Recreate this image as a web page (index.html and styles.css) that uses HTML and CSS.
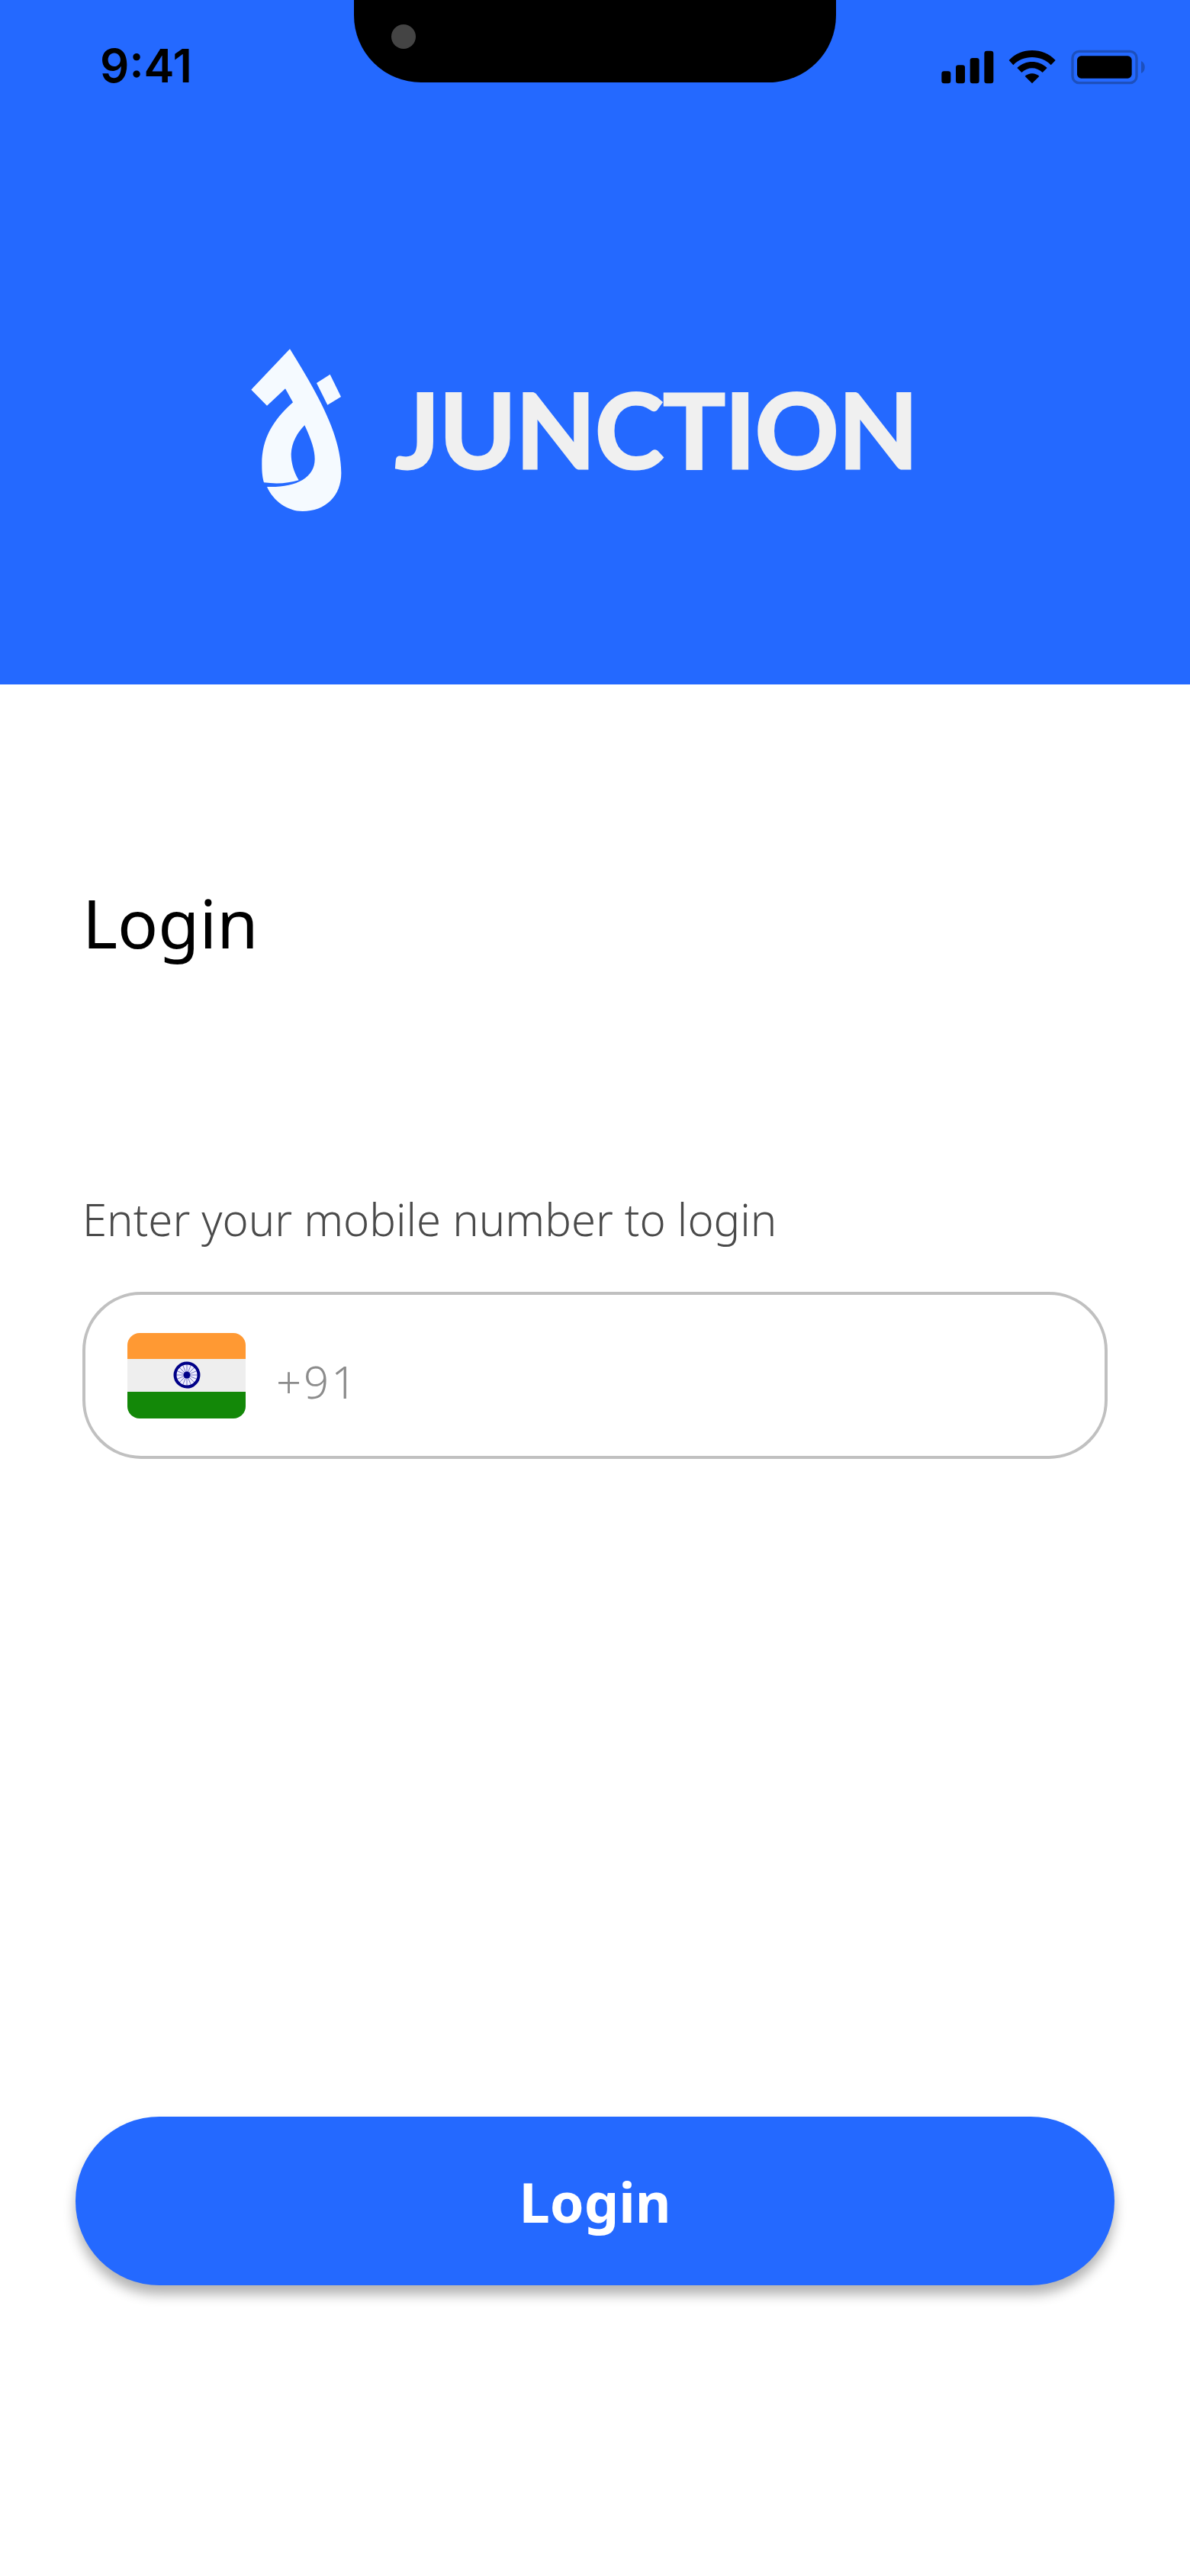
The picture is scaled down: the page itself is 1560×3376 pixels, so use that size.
FILE: index.html

```html
<!DOCTYPE html>
<html>
<head>
    <title>Junction Login</title>
    <meta http-equiv="Content-Type" content="text/html;charset=UTF-8"/>
    <link rel="stylesheet" href="styles.css">
</head>
<body>
<div class="top-panel">
    <div class="status-bar">
        <div class="status-time">9:41</div>
        <div class="notch"><span class="camera"></span></div>
        <svg class="status-icons" viewBox="0 0 960 210">
            <rect x="103" y="130" width="36" height="48" rx="10"/>
            <rect x="159" y="106" width="36" height="72" rx="10"/>
            <rect x="215" y="78" width="36" height="100" rx="10"/>
            <rect x="271" y="50" width="36" height="128" rx="10"/>
            <path d="M368 87C415 35 503 35 551 87L533 106C495 65 423 65 385 106Z"/>
            <path d="M400 117C435 85 483 85 518 117L500 135C475 112 443 112 418 135Z"/>
            <path d="M431 150C447 135 471 135 487 150L459 178Z"/>
            <rect x="618" y="52" width="252" height="124" rx="26" fill="none" stroke="#1d50bd" stroke-width="10"/>
            <rect x="636" y="70" width="215" height="88" rx="16"/>
            <path d="M888 90C906 96 908 130 888 138Z" fill="#1d50bd"/>
        </svg>
    </div>
    <div class="brand">
        <svg class="brand-mark" viewBox="0 0 720 750">
            <path d="M240 82L88 242L150 305L222 238L252 292C170 365 128 440 130 540C130 570 133 590 138 607C190 614 235 610 275 598C255 565 245 530 245 495C247 450 270 410 298 382C325 440 338 480 338 515C338 590 260 628 150 624C175 680 230 720 290 720C380 720 442 660 442 570C442 420 350 260 240 82Z"/>
            <path d="M345 216L398 182L441 270L388 302Z"/>
        </svg>
        <span class="brand-name">JUNCTION</span>
    </div>
</div>
<div class="login-form">
    <h1 class="login-title">Login</h1>
    <div class="mobile-label">Enter your mobile number to login</div>
    <div class="mobile-input">
        <div class="flag">
            <div class="flag-orange"></div>
            <div class="flag-white">
                <svg class="chakra" viewBox="0 0 36 36">
                    <circle cx="18" cy="18" r="15.5" fill="#eef" stroke="#000088" stroke-width="4"/>
                    <path d="M18 3V33M3 18H33M7.4 7.4L28.6 28.6M28.6 7.4L7.4 28.6M12.3 4.2L23.7 31.8M23.7 4.2L12.3 31.8M4.2 12.3L31.8 23.7M4.2 23.7L31.8 12.3" stroke="#000088" stroke-width=".5"/>
                    <circle cx="18" cy="18" r="4.5" fill="#000088"/>
                </svg>
            </div>
            <div class="flag-green"></div>
        </div>
        <span class="dial-code">+91</span>
    </div>
    <button class="login-button">Login</button>
</div>
</body>
</html>
```

FILE: styles.css

```css
* {
    box-sizing: border-box;
}

html, body {
    margin: 0;
    padding: 0;
}

body {
    width: 1560px;
    height: 3376px;
    overflow: hidden;
    background-color: #fff;
    font-family: "Noto Sans", sans-serif;
}

.top-panel {
    height: 897px;
    background-color: #2469ff;
}

.status-bar {
    display: grid;
    grid-template-columns: 464px 632px 464px;
    grid-template-rows: 108px;
    height: 108px;
}

.status-time {
    padding: 56px 0 0 131px;
    font-family: "Inter", sans-serif;
    font-size: 60px;
    font-weight: 600;
    line-height: 60px;
    color: #000;
}

.notch {
    position: relative;
    background-color: #000;
    border-radius: 0 0 88px 88px;
}

.camera {
    position: absolute;
    left: 49px;
    top: 32px;
    width: 32px;
    height: 32px;
    border-radius: 50%;
    background-color: #444;
}

.status-icons {
    display: block;
    width: 320px;
    height: 70px;
    margin: 50px 0 0 104px;
}

.brand {
    display: flex;
    align-items: center;
    height: 250px;
    margin-top: 322px;
    padding-left: 300px;
}

.brand-mark {
    width: 240px;
    height: 250px;
    fill: #f5faff;
}

.brand-name {
    margin: 14px 0 0 -22px;
    font-family: "Lato", sans-serif;
    font-size: 136px;
    font-weight: 700;
    line-height: 136px;
    letter-spacing: -.7px;
    color: #f0f0f0;
    -webkit-text-stroke: 3px #f0f0f0;
}

.login-form {
    padding: 0 99px;
}

.login-title {
    margin: 262px 0 0 9px;
    font-size: 88px;
    font-weight: 400;
    line-height: 100px;
    color: #000;
}

.mobile-label {
    margin: 309px 0 0 9px;
    font-size: 58px;
    font-weight: 300;
    line-height: 60px;
    color: #4a4a4a;
}

.mobile-input {
    display: flex;
    align-items: center;
    width: 1344px;
    height: 219px;
    margin: 65px 0 0 9px;
    padding-left: 55px;
    border: 4px solid #c0c0c0;
    border-radius: 77px;
}

.flag {
    width: 155px;
    height: 112px;
    border-radius: 16px;
    overflow: hidden;
}

.flag-orange {
    height: 34px;
    background-color: #ff9933;
}

.flag-white {
    display: flex;
    align-items: center;
    justify-content: center;
    height: 43px;
    background-color: #eee;
}

.flag-green {
    height: 35px;
    background-color: #138808;
}

.chakra {
    width: 36px;
    height: 36px;
}

.dial-code {
    margin: 16px 0 0 40px;
    font-size: 58px;
    font-weight: 300;
    letter-spacing: 3px;
    color: #8c8c8c;
}

.login-button {
    display: block;
    width: 1362px;
    height: 221px;
    margin-top: 862px;
    border: none;
    border-radius: 110px;
    background-color: #2469ff;
    box-shadow: 0 12px 16px rgba(0, 0, 0, .3);
    font-family: "Noto Sans", sans-serif;
    font-size: 72px;
    font-weight: 700;
    color: #fff;
}
```
